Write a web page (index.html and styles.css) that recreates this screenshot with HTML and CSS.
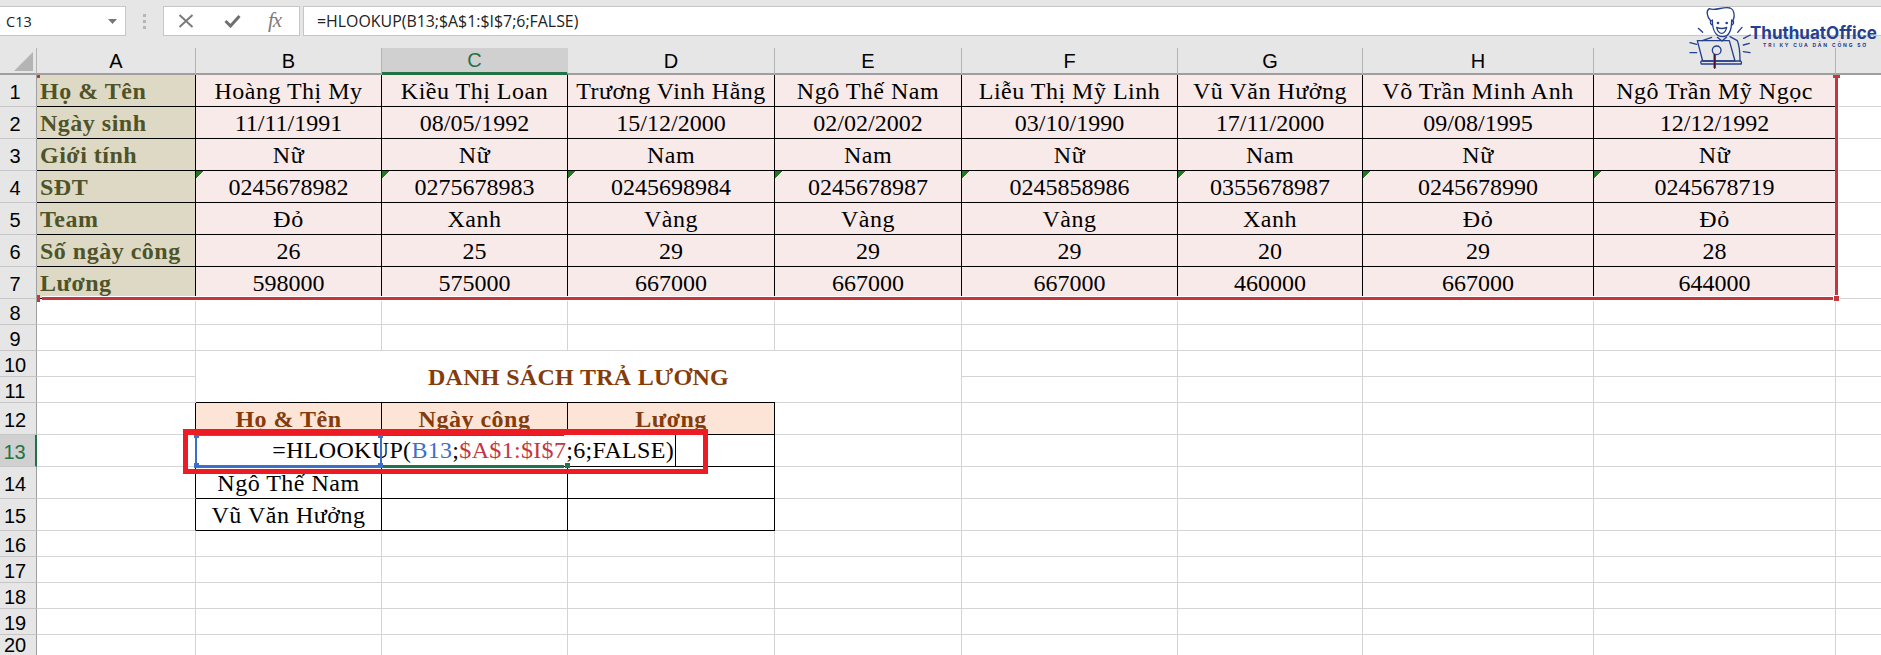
FILE: index.html
```html
<!DOCTYPE html>
<html lang="vi">
<head>
<meta charset="utf-8">
<title>HLOOKUP</title>
<link rel="stylesheet" href="styles.css">
</head>
<body>
<header class="toolbar">
  <div class="namebox"><span>C13</span><svg class="caret" width="9" height="5" viewBox="0 0 9 5"><path d="M0 0h9L4.500 5z"/></svg></div>
  <div class="grip"><i></i><i></i><i></i></div>
  <div class="fnbuttons">
    <svg class="ico-x" width="16" height="14" viewBox="0 0 16 14"><path d="M1.500 1l13 12M14.500 1l-13 12"/></svg>
    <svg class="ico-check" width="17" height="14" viewBox="0 0 17 14"><path d="M1.500 7l5 5L15.500 2"/></svg>
    <span class="fx">fx</span>
  </div>
  <div class="formula">=HLOOKUP(B13;$A$1:$I$7;6;FALSE)</div>
</header>
<main class="sheet">
<table class="grid">
<colgroup><col class="w-h"><col class="w-a"><col class="w-b"><col class="w-c"><col class="w-d"><col class="w-e"><col class="w-f"><col class="w-g"><col class="w-h2"><col class="w-i"><col class="w-j"></colgroup>
<thead><tr><th class="corner"><svg width="19" height="19" viewBox="0 0 19 19"><path d="M19 0v19H0z"/></svg></th><th>A</th><th>B</th><th class="sel">C</th><th>D</th><th>E</th><th>F</th><th>G</th><th>H</th><th>I</th><th class="last"></th></tr></thead>
<tbody>
<tr class="big"><th>1</th><td class="lab">Họ &amp; Tên</td><td class="p">Hoàng Thị My</td><td class="p">Kiều Thị Loan</td><td class="p">Trương Vinh Hằng</td><td class="p">Ngô Thế Nam</td><td class="p">Liễu Thị Mỹ Linh</td><td class="p">Vũ Văn Hưởng</td><td class="p">Võ Trần Minh Anh</td><td class="p">Ngô Trần Mỹ Ngọc</td><td></td></tr>
<tr class="big"><th>2</th><td class="lab">Ngày sinh</td><td class="p n">11/11/1991</td><td class="p n">08/05/1992</td><td class="p n">15/12/2000</td><td class="p n">02/02/2002</td><td class="p n">03/10/1990</td><td class="p n">17/11/2000</td><td class="p n">09/08/1995</td><td class="p n">12/12/1992</td><td></td></tr>
<tr class="big"><th>3</th><td class="lab">Giới tính</td><td class="p">Nữ</td><td class="p">Nữ</td><td class="p">Nam</td><td class="p">Nam</td><td class="p">Nữ</td><td class="p">Nam</td><td class="p">Nữ</td><td class="p">Nữ</td><td></td></tr>
<tr class="big"><th>4</th><td class="lab">SĐT</td><td class="p n tri">0245678982</td><td class="p n tri">0275678983</td><td class="p n tri">0245698984</td><td class="p n tri">0245678987</td><td class="p n tri">0245858986</td><td class="p n tri">0355678987</td><td class="p n tri">0245678990</td><td class="p n tri">0245678719</td><td></td></tr>
<tr class="big"><th>5</th><td class="lab">Team</td><td class="p">Đỏ</td><td class="p">Xanh</td><td class="p">Vàng</td><td class="p">Vàng</td><td class="p">Vàng</td><td class="p">Xanh</td><td class="p">Đỏ</td><td class="p">Đỏ</td><td></td></tr>
<tr class="big"><th>6</th><td class="lab">Số ngày công</td><td class="p n">26</td><td class="p n">25</td><td class="p n">29</td><td class="p n">29</td><td class="p n">29</td><td class="p n">20</td><td class="p n">29</td><td class="p n">28</td><td></td></tr>
<tr class="big"><th>7</th><td class="lab">Lương</td><td class="p n">598000</td><td class="p n">575000</td><td class="p n">667000</td><td class="p n">667000</td><td class="p n">667000</td><td class="p n">460000</td><td class="p n">667000</td><td class="p n">644000</td><td></td></tr>
<tr><th>8</th><td></td><td></td><td></td><td></td><td></td><td></td><td></td><td></td><td></td><td></td></tr>
<tr><th>9</th><td></td><td></td><td></td><td></td><td></td><td></td><td></td><td></td><td></td><td></td></tr>
<tr><th>10</th><td></td><td class="title" colspan="4" rowspan="2">DANH SÁCH TRẢ LƯƠNG</td><td></td><td></td><td></td><td></td><td></td></tr>
<tr><th>11</th><td></td><td></td><td></td><td></td><td></td><td></td></tr>
<tr class="big"><th>12</th><td class="blk-r"></td><td class="hd">Họ &amp; Tên</td><td class="hd">Ngày công</td><td class="hd">Lương</td><td></td><td></td><td></td><td></td><td></td><td></td></tr>
<tr class="big"><th class="sel">13</th><td class="blk-r"></td><td class="b"></td><td class="b"></td><td class="b"></td><td></td><td></td><td></td><td></td><td></td><td></td></tr>
<tr class="big"><th>14</th><td class="blk-r"></td><td class="b">Ngô Thế Nam</td><td class="b"></td><td class="b"></td><td></td><td></td><td></td><td></td><td></td><td></td></tr>
<tr class="big"><th>15</th><td class="blk-r"></td><td class="b">Vũ Văn Hưởng</td><td class="b"></td><td class="b"></td><td></td><td></td><td></td><td></td><td></td><td></td></tr>
<tr><th>16</th><td></td><td></td><td></td><td></td><td></td><td></td><td></td><td></td><td></td><td></td></tr>
<tr><th>17</th><td></td><td></td><td></td><td></td><td></td><td></td><td></td><td></td><td></td><td></td></tr>
<tr><th>18</th><td></td><td></td><td></td><td></td><td></td><td></td><td></td><td></td><td></td><td></td></tr>
<tr><th>19</th><td></td><td></td><td></td><td></td><td></td><td></td><td></td><td></td><td></td><td></td></tr>
<tr class="cut"><th>20</th><td></td><td></td><td></td><td></td><td></td><td></td><td></td><td></td><td></td><td></td></tr>
</tbody>
</table>

<div class="rng-bottom"></div>
<div class="rng-right"></div>
<div class="handle h-tl"></div>
<div class="handle h-bl"></div>
<div class="handle h-tr"></div>
<div class="handle h-br"></div>

<div class="edit"><span class="ed-text">=HLOOKUP(<span class="blue">B13</span>;<span class="red">$A$1:$I$7</span>;6;FALSE)</span></div>
<div class="ref-blue"><i class="bh bh1"></i><i class="bh bh2"></i><i class="bh bh3"></i><i class="bh bh4"></i></div>
<div class="sel-green"><i class="gh"></i></div>
<div class="annot"></div>
</main>

<div class="logo">
  <svg class="logo-art" width="72" height="70" viewBox="0 0 216 210">
    <g class="ln">
      <path d="M92 62C80 50 78 32 88 26c20 8 42-8 62-2 15 6 16 30 5 42"/>
      <path d="M97 60c0 34 13 50 31 50s27-20 27-50"/>
      <path d="M97 62c-6-2-9 8-1 13M155 62c6-2 9 8 1 13"/>
      <path d="M110 82q15 7 30 0q-4 18-15 18t-15-18z"/>
      <path d="M95 112l-28 10M112 112l14 11 14-12M150 110l22 12q8 18 8 62"/>
      <path d="M52 122h96l17 61H68z"/>
      <path d="M64 183h118q4 4 2 9H64q-4-5 0-9z"/>
      <circle cx="110" cy="151" r="13"/>
      <path d="M55 85l13 12M30 128l20 5M30 158h20M186 82l-13 15M211 105l-20 10M208 130l-18 5M210 158l-20-3"/>
    </g>
    <circle class="dot" cx="114" cy="69" r="4"/><circle class="dot" cx="140" cy="69" r="4"/>
    <path class="stem" d="M104 165v41"/>
  </svg>
  <div class="logo-text">ThuthuatOffice</div>
  <div class="logo-tag">TRI KỶ CỦA DÂN CÔNG SỞ</div>
</div>
</body>
</html>
```
FILE: styles.css
```css
* { box-sizing: border-box; }
html, body { margin: 0; padding: 0; }
body { width: 1881px; height: 655px; overflow: hidden; background: #e6e6e6; position: relative; font-family: "Liberation Serif", "Times New Roman", serif; }

.toolbar { height: 48px; display: flex; align-items: flex-start; padding-top: 6px; }
.namebox { width: 126px; height: 30px; background: #fff; border: 1px solid #c6c6c6; border-left: 0; display: flex; align-items: center; justify-content: space-between; padding: 0 8px 0 6px; font: 14.500px "Open Sans", sans-serif; color: #222; }
.caret path { fill: #777; }
.grip { width: 37px; height: 30px; display: flex; flex-direction: column; gap: 3px; align-items: center; justify-content: center; padding-right: 1px; }
.grip i { display: block; width: 3px; height: 3px; background: #b5b5b5; }
.fnbuttons { width: 137px; height: 30px; background: #fff; border: 1px solid #c6c6c6; display: flex; align-items: center; padding-left: 14px; }
.ico-x { fill: none; stroke: #7b7b7b; stroke-width: 2; }
.ico-check { fill: none; stroke: #6f6f6f; stroke-width: 3; margin-left: 30px; }
.fx { font: italic 21px "Liberation Serif", serif; color: #7d7d7d; margin-left: 27px; letter-spacing: -1px; position: relative; top: -1px; }
.formula { flex: 1; height: 30px; margin-left: 3px; background: #fff; border: 1px solid #c6c6c6; border-right: 0; padding-left: 13px; font: 15.900px/28px "Open Sans", sans-serif; color: #222; }

.sheet { position: relative; width: 1881px; height: 607px; overflow: hidden; }
.grid { border-collapse: separate; border-spacing: 0; table-layout: fixed; width: 1881px; background: #fff; }
.w-h { width: 37px; } .w-a { width: 159px; } .w-b { width: 186px; } .w-c { width: 186px; } .w-d { width: 207px; } .w-e { width: 187px; } .w-f { width: 216px; } .w-g { width: 185px; } .w-h2 { width: 231px; } .w-i { width: 242px; } .w-j { width: 45px; }

thead th { height: 27px; background: #e6e6e6; border-right: 1px solid #b4b4b4; border-bottom: 2px solid #9f9f9f; font: 400 20px/20px "Liberation Sans", Arial, sans-serif; color: #000; padding: 0; vertical-align: middle; }
thead th.corner { position: relative; padding: 0; }
thead th.corner svg { position: absolute; left: 14px; top: 4px; display: block; }
.corner path { fill: #b4b4b4; }
thead th.sel { background: #d0d0d0; color: #217346; border-bottom: 3px solid #217346; border-right-color: #d0d0d0; }
thead th.last { border-right: 0; }

tbody th { background: #e6e6e6; border-right: 1px solid #9f9f9f; border-bottom: 1px solid #c6c6c6; font: 400 20px/20px "Liberation Sans", Arial, sans-serif; color: #000; padding: 2px 6px 0 0; text-align: center; vertical-align: middle; }
tbody th.sel { background: #d0d0d0; color: #217346; border-right: 2px solid #217346; }
tr { height: 26px; }
tr.big { height: 32px; }
tr.cut { height: 20px; }
tr.cut th { padding: 0 6px 0 0; border-bottom: 0; line-height: 20px; }
tr.cut td { border-bottom: 0; }
td { border-right: 1px solid #d4d4d4; border-bottom: 1px solid #d4d4d4; font-size: 24px; line-height: 26px; padding: 0 0 2px; letter-spacing: .5px; text-align: center; vertical-align: bottom; color: #000; white-space: nowrap; overflow: hidden; }
td:last-child { border-right: 0; }
td.n { letter-spacing: 0; }
td.lab { background: #ddd9c4; color: #4f5329; font-weight: 700; text-align: left; padding-left: 3px; border-right-color: #000; border-bottom-color: #000; }
td.p { background: #f9eaea; border-right-color: #000; border-bottom-color: #000; }
td.tri { background-image: linear-gradient(135deg, #1f7a1f 0 5px, transparent 5px); background-size: 8px 8px; background-repeat: no-repeat; }
td.title { color: #843c0c; font-weight: 700; letter-spacing: .3px; line-height: 32px; vertical-align: middle; padding: 0; }
td.hd { background: #fce4d6; color: #843c0c; font-weight: 700; border-right-color: #000; border-bottom-color: #000; box-shadow: 0 -1px 0 #000; }
td.b { border-right-color: #000; border-bottom-color: #000; }
td.blk-r { border-right-color: #000; }

.rng-bottom { position: absolute; left: 42px; top: 249px; width: 1792px; height: 3px; background: #c5363f; box-shadow: 0 -1px 0 #fff, 0 1px 0 #fff; }
.rng-right { position: absolute; left: 1835px; top: 28px; width: 3px; height: 222px; background: #c5363f; box-shadow: 1px 0 0 #fff; }
.handle { position: absolute; background: #c5363f; }
.h-tl { left: 37px; top: 27px; width: 3px; height: 3px; }
.h-bl { left: 37px; top: 247px; width: 3px; height: 7px; }
.h-tr { left: 1833px; top: 27px; width: 7px; height: 3px; }
.h-br { left: 1833px; top: 247px; width: 7px; height: 7px; border: 1px solid #fff; }

.edit { position: absolute; left: 196px; top: 387px; width: 480px; height: 31px; background: #fff; border-right: 1px solid #000; text-align: right; font-size: 24px; letter-spacing: .32px; line-height: 30px; white-space: nowrap; color: #000; }
.ed-text { padding-right: 1px; }
.blue { color: #3b6fc9; }
.red { color: #c5363f; }
.ref-blue { position: absolute; left: 195px; top: 386px; width: 187px; height: 34px; border: 2px solid #3b6fc9; border-bottom-width: 3px; }
.bh { position: absolute; width: 5px; height: 5px; background: #3b6fc9; }
.bh1 { left: -3px; top: -3px; } .bh2 { right: -3px; top: -3px; } .bh3 { left: -3px; bottom: -3px; } .bh4 { right: -3px; bottom: -3px; }
.sel-green { position: absolute; left: 383px; top: 386px; width: 181px; height: 34px; border-top: 2px solid #217346; border-bottom: 3px solid #217346; }
.gh { position: absolute; left: 182px; bottom: -3px; width: 5px; height: 5px; background: #217346; }
.annot { position: absolute; left: 183px; top: 381px; width: 525px; height: 45px; border: 5px solid #ed1c24; border-top-width: 6px; }

.logo { position: absolute; left: 1680px; top: 0; width: 201px; height: 72px; }
.logo-art { position: absolute; left: 0; top: 0; display: block; }
.ln { fill: none; stroke: #24408e; stroke-width: 4; stroke-linejoin: round; stroke-linecap: round; }
.dot { fill: #24408e; }
.stem { stroke: #4a1030; stroke-width: 4; fill: none; }
.logo-text { position: absolute; left: 70px; top: 23px; font: 700 17px/20px Inter, sans-serif; color: #24408e; white-space: nowrap; }
.logo-tag { position: absolute; left: 83px; top: 41px; font: 700 5px/8px Inter, sans-serif; letter-spacing: 1.800px; color: #24408e; white-space: nowrap; }
```
